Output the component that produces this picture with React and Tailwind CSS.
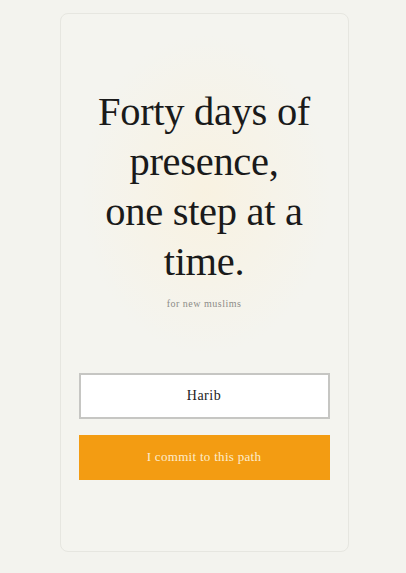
export default function App() {
  return (
    <div className="min-h-screen bg-[#f3f3ee] flex justify-center pt-[13px] pl-[2px]" style={{ fontFamily: '"Liberation Serif", "DejaVu Serif", serif' }}>
      <div className="relative w-[289px] h-[539px] rounded-lg border border-[#e6e6e0] bg-[#f4f4ef] overflow-hidden">
        <div className="absolute left-[20px] top-[20px] w-[250px] h-[320px] rounded-full bg-[radial-gradient(closest-side,rgba(252,240,214,0.55),rgba(244,244,239,0))]"></div>
        <div className="relative flex flex-col items-center px-[18px] pt-[73px]">
          <h1 className="text-center text-[40.5px] leading-[50px] text-[#1a1a1a] font-normal tracking-[-0.3px]">
            <span className="block">Forty days of</span>
            <span className="block">presence,</span>
            <span className="block">one step at a</span>
            <span className="block">time.</span>
          </h1>
          <p className="mt-[9px] text-[10px] leading-[16.5px] tracking-[0.5px] text-[#8c8c88]">for new muslims</p>
          <div className="mt-[60px] w-full h-[46px] bg-white border-2 border-[#c6c6c3] flex items-center justify-center text-[14px] text-[#222] tracking-[0.5px]">
            Harib
          </div>
          <button className="mt-[16px] w-full h-[45px] bg-[#f39c12] flex items-center justify-center text-[13px] text-[#fdeccd] tracking-[0.3px]">
            I commit to this path
          </button>
        </div>
      </div>
    </div>
  );
}
